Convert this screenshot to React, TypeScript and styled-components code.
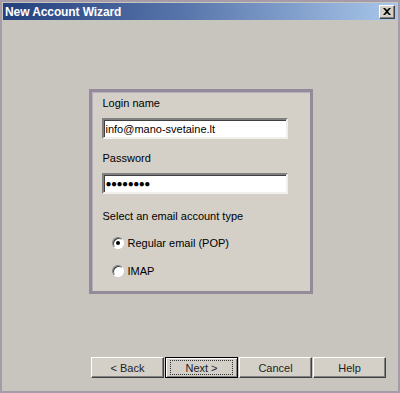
import React from "react";
import styled, { createGlobalStyle } from "styled-components";

const GlobalStyle = createGlobalStyle`
  html, body {
    margin: 0;
    padding: 0;
    background: #c8c4be;
  }
  * {
    box-sizing: border-box;
  }
`;

const Window = styled.div`
  width: 400px;
  height: 393px;
  display: flex;
  flex-direction: column;
  background: #c8c4be;
  border: 2px solid #a59ba9;
  padding: 1px;
  font-family: "Liberation Sans", Arial, sans-serif;
  font-size: 11px;
  color: #000;
`;

const TitleBar = styled.div`
  height: 17px;
  display: flex;
  align-items: center;
  justify-content: space-between;
  padding: 0 2px 0 2px;
  background: linear-gradient(90deg, #23407f 0%, #5774aa 45%, #a8c7ea 100%);
`;

const Title = styled.span`
  color: #fff;
  font-weight: bold;
  font-size: 12px;
  letter-spacing: -0.1px;
`;

const CloseButton = styled.div`
  width: 16px;
  height: 14px;
  display: flex;
  align-items: center;
  justify-content: center;
  background: #d4d0c8;
  border: 1px solid;
  border-color: #fff #404040 #404040 #fff;
  box-shadow: inset -1px -1px 0 #808080;
`;

const Body = styled.div`
  flex: 1;
  display: flex;
  flex-direction: column;
  align-items: center;
  padding-top: 69px;
  padding-left: 1px;
`;

const Panel = styled.div`
  width: 224px;
  height: 205px;
  background: #d4d0c8;
  border: 3px solid #958a99;
  box-shadow: inset 1px 1px 0 #b7aebb;
  padding: 4px 10px 0 10px;
  display: flex;
  flex-direction: column;
`;

const Label = styled.div<{ $gap?: number }>`
  padding-left: 1px;
  margin-top: ${(p) => p.$gap ?? 0}px;
  line-height: 14px;
`;

const Field = styled.div`
  margin-top: 8px;
  width: 186px;
  height: 21px;
  background: #fff;
  border: 2px solid;
  border-color: #808080 #f2f0ec #f2f0ec #808080;
  box-shadow: inset 1px 1px 0 #404040;
  display: flex;
  align-items: center;
  padding-left: 2px;
  font-size: 11px;
`;

const Dots = styled.span`
  font-size: 10px;
  letter-spacing: -0.5px;
  line-height: 1;
`;

const RadioRow = styled.div<{ $gap: number }>`
  display: flex;
  align-items: center;
  gap: 4px;
  margin-top: ${(p) => p.$gap}px;
  padding-left: 10px;
  line-height: 14px;
`;

const RadioDot = styled.span<{ $checked?: boolean }>`
  width: 12px;
  height: 12px;
  border-radius: 50%;
  background: #fff;
  border: 1px solid;
  border-color: #808080 #fff #fff #808080;
  box-shadow: inset 1px 1px 0 #404040;
  display: flex;
  align-items: center;
  justify-content: center;
  &::after {
    content: "";
    width: 4px;
    height: 4px;
    border-radius: 50%;
    background: ${(p) => (p.$checked ? "#000" : "transparent")};
  }
`;

const Footer = styled.div`
  display: flex;
  justify-content: flex-end;
  gap: 1px;
  padding: 0 11px 12px 0;
`;

const Button = styled.div<{ $default?: boolean }>`
  width: 73px;
  height: 21px;
  display: flex;
  align-items: center;
  justify-content: center;
  background: #d4d0c8;
  border: 1px solid;
  border-color: ${(p) =>
    p.$default ? "#000" : "#fff #404040 #404040 #fff"};
  box-shadow: ${(p) =>
    p.$default
      ? "inset 1px 1px 0 #fff, inset -1px -1px 0 #808080"
      : "inset -1px -1px 0 #808080"};
  color: #222;
`;

const FocusBox = styled.span`
  display: flex;
  align-items: center;
  justify-content: center;
  width: 61px;
  height: 13px;
  outline: 1px dotted #333;
`;

export default function App() {
  return (
    <>
      <GlobalStyle />
      <Window>
        <TitleBar>
          <Title>New Account Wizard</Title>
          <CloseButton>
            <svg width="8" height="7" viewBox="0 0 8 7">
              <path d="M0 0L2 0L4 2L6 0L8 0L5 3.5L8 7L6 7L4 5L2 7L0 7L3 3.5Z" fill="#000" />
            </svg>
          </CloseButton>
        </TitleBar>
        <Body>
          <Panel>
            <Label>Login name</Label>
            <Field>info@mano-svetaine.lt</Field>
            <Label $gap={12}>Password</Label>
            <Field>
              <Dots>●●●●●●●●</Dots>
            </Field>
            <Label $gap={15}>Select an email account type</Label>
            <RadioRow $gap={13}>
              <RadioDot $checked />
              Regular email (POP)
            </RadioRow>
            <RadioRow $gap={14}>
              <RadioDot />
              IMAP
            </RadioRow>
          </Panel>
        </Body>
        <Footer>
          <Button>&lt; Back</Button>
          <Button $default>
            <FocusBox>Next &gt;</FocusBox>
          </Button>
          <Button>Cancel</Button>
          <Button>Help</Button>
        </Footer>
      </Window>
    </>
  );
}
